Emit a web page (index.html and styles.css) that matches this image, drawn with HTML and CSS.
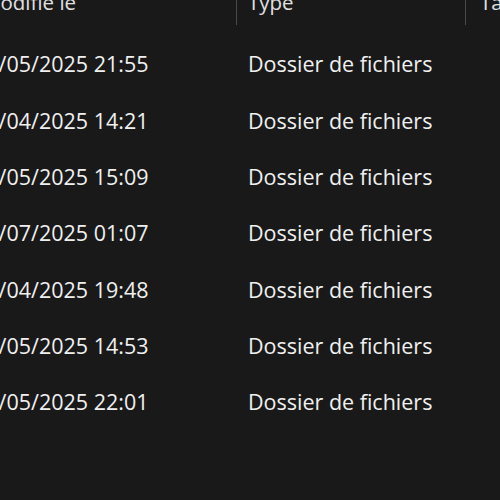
FILE: index.html
```html
<!DOCTYPE html>
<html lang="fr">
<head>
<meta charset="utf-8">
<link rel="stylesheet" href="styles.css">
</head>
<body>
<div class="view">
  <div class="header">
    <div class="hcell c-date">Modifié le</div>
    <div class="hcell c-type sep">Type</div>
    <div class="hcell c-size sep">Taille</div>
  </div>
  <div class="row"><div class="cell c-date">12/05/2025 21:55</div><div class="cell c-type">Dossier de fichiers</div><div class="cell c-size"></div></div>
  <div class="row"><div class="cell c-date">28/04/2025 14:21</div><div class="cell c-type">Dossier de fichiers</div><div class="cell c-size"></div></div>
  <div class="row"><div class="cell c-date">20/05/2025 15:09</div><div class="cell c-type">Dossier de fichiers</div><div class="cell c-size"></div></div>
  <div class="row"><div class="cell c-date">02/07/2025 01:07</div><div class="cell c-type">Dossier de fichiers</div><div class="cell c-size"></div></div>
  <div class="row"><div class="cell c-date">22/04/2025 19:48</div><div class="cell c-type">Dossier de fichiers</div><div class="cell c-size"></div></div>
  <div class="row"><div class="cell c-date">25/05/2025 14:53</div><div class="cell c-type">Dossier de fichiers</div><div class="cell c-size"></div></div>
  <div class="row"><div class="cell c-date">21/05/2025 22:01</div><div class="cell c-type">Dossier de fichiers</div><div class="cell c-size"></div></div>
</div>
</body>
</html>
```
FILE: styles.css
```css
html, body {
  margin: 0;
  padding: 0;
  background: #191919;
  overflow: hidden;
  height: 100%;
}
body {
  font-family: "Open Sans", "Noto Sans", "Liberation Sans", sans-serif;
  font-size: 21.5px;
  color: #f0f0f0;
}
.view {
  margin-left: -26px;
  margin-top: -14px;
  width: 560px;
}
.header, .row {
  display: grid;
  grid-template-columns: 262px 229px 1fr;
}
.header {
  height: 50px;
}
.hcell {
  position: relative;
  line-height: 28px;
  padding-top: 2px;
  white-space: nowrap;
  color: #e0e0e0;
  font-size: 20.5px;
}
.hcell.c-date { padding-left: 8px; }
.hcell.c-type { padding-left: 12px; }
.hcell.c-size { padding-left: 15px; }
.sep::before {
  content: "";
  position: absolute;
  left: 0;
  top: 0;
  height: 39px;
  width: 1px;
  background: #4a4a4a;
}
.row {
  height: 56.33px;
  align-items: center;
}
.cell {
  white-space: nowrap;
  line-height: 1;
}
.cell.c-type { padding-left: 12px; }
```
